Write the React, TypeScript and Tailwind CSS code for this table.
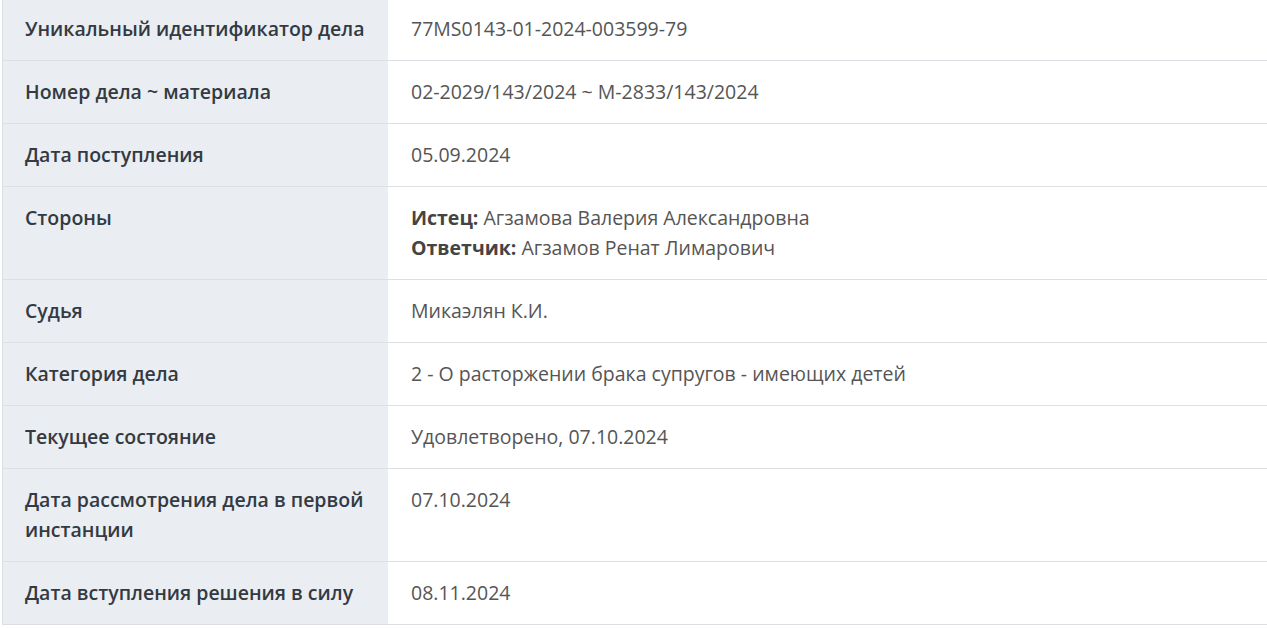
const rows: { label: string; value: React.ReactNode }[] = [
  { label: 'Уникальный идентификатор дела', value: '77MS0143-01-2024-003599-79' },
  { label: 'Номер дела ~ материала', value: '02-2029/143/2024 ~ М-2833/143/2024' },
  { label: 'Дата поступления', value: '05.09.2024' },
  {
    label: 'Стороны',
    value: (
      <>
        <div>
          <b className="font-bold text-[#444]">Истец:</b> Агзамова Валерия Александровна
        </div>
        <div>
          <b className="font-bold text-[#444]">Ответчик:</b> Агзамов Ренат Лимарович
        </div>
      </>
    ),
  },
  { label: 'Судья', value: 'Микаэлян К.И.' },
  { label: 'Категория дела', value: '2 - О расторжении брака супругов - имеющих детей' },
  { label: 'Текущее состояние', value: 'Удовлетворено, 07.10.2024' },
  { label: 'Дата рассмотрения дела в первой инстанции', value: '07.10.2024' },
  { label: 'Дата вступления решения в силу', value: '08.11.2024' },
];

export default function App() {
  return (
    <div className="min-h-screen bg-white pl-[2px] font-['Open_Sans',sans-serif] text-[19.5px] leading-[30px]">
      <div className="-mt-[3px] border-l border-t border-b border-[#dcdfe3]">
        {rows.map((r, i) => (
          <div
            key={i}
            className={
              'grid grid-cols-[385px_1fr] ' + (i > 0 ? 'border-t border-[#dcdfe3]' : '')
            }
          >
            <div className="bg-[#eaedf2] pl-[22px] pr-4 py-4 font-semibold text-[#333a42]">
              {r.label}
            </div>
            <div className="pl-[23px] pr-4 py-4 text-[#555]">{r.value}</div>
          </div>
        ))}
      </div>
    </div>
  );
}
